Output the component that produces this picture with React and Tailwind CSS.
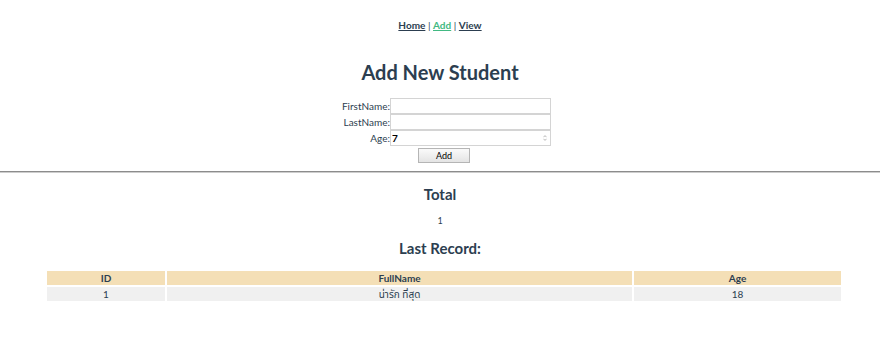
const font = { fontFamily: 'Lato, "Noto Sans", "Noto Sans Thai", sans-serif' };

export default function App() {
    return (
        <div className="min-h-[360px] bg-white text-[#2c3e50]" style={font}>
            <nav className="pt-[19px] text-center text-[10px] font-bold leading-[12px]">
                <a className="underline">Home</a>
                <span className="font-normal"> | </span>
                <a className="text-[#42b983] underline">Add</a>
                <span className="font-normal"> | </span>
                <a className="underline">View</a>
            </nav>

            <h1 className="mt-[29px] text-center text-[20px] font-bold leading-[24px]">Add New Student</h1>

            <form className="mt-[14px] flex flex-col items-center">
                <div className="flex flex-col">
                    <Row label="FirstName:" />
                    <Row label="LastName:" />
                    <Row label="Age:" value="7" spinner />
                </div>
                <button
                    type="button"
                    className="mt-[2px] ml-[8px] block h-[15px] w-[52px] border border-[#b5b5b5] bg-gradient-to-b from-[#fafafa] to-[#e4e4e4] text-[9px] leading-[13px] text-black"
                >
                    Add
                </button>
            </form>

            <div className="mt-[8px] h-[2px] border-t border-[#8c8c8c] border-b border-b-[#cdcdcd]" />

            <h2 className="mt-[12px] text-center text-[15px] font-bold leading-[18px]">Total</h2>
            <p className="mt-[12px] text-center text-[9px] leading-[12px]">1</p>
            <h2 className="mt-[12px] text-center text-[15px] font-bold leading-[18px]">Last Record:</h2>

            <div className="mt-[14px] ml-[47px] grid w-[794px] grid-cols-[118px_465px_1fr] gap-[2px] text-center text-[10px] leading-[14px]">
                <div className="bg-[#f4dfb6] font-bold">ID</div>
                <div className="bg-[#f4dfb6] font-bold">FullName</div>
                <div className="bg-[#f4dfb6] font-bold">Age</div>
                <div className="bg-[#f0f0f0]">1</div>
                <div className="bg-[#f0f0f0]">น่ารัก ที่สุด</div>
                <div className="bg-[#f0f0f0]">18</div>
            </div>
        </div>
    );
}

function Row({ label, value = '', spinner }) {
    return (
        <div className="flex h-[16px] items-center">
            <label className="w-[61px] text-right text-[10px] leading-[16px]">{label}</label>
            <div className="relative h-[16px]">
                <input
                    readOnly
                    value={value}
                    className="block h-[16px] w-[161px] border border-[#d4d4d4] bg-white px-[1px] text-[10px] font-bold leading-[14px] text-black outline-none"
                />
                {spinner && (
                    <svg className="absolute right-[4px] top-[5px] h-[6px] w-[4px]" viewBox="0 0 4 6">
                        <path d="M0.5 2.2 2 0.6 3.5 2.2M0.5 3.8 2 5.4 3.5 3.8" fill="none" stroke="#999" strokeWidth="0.7" />
                    </svg>
                )}
            </div>
        </div>
    );
}
